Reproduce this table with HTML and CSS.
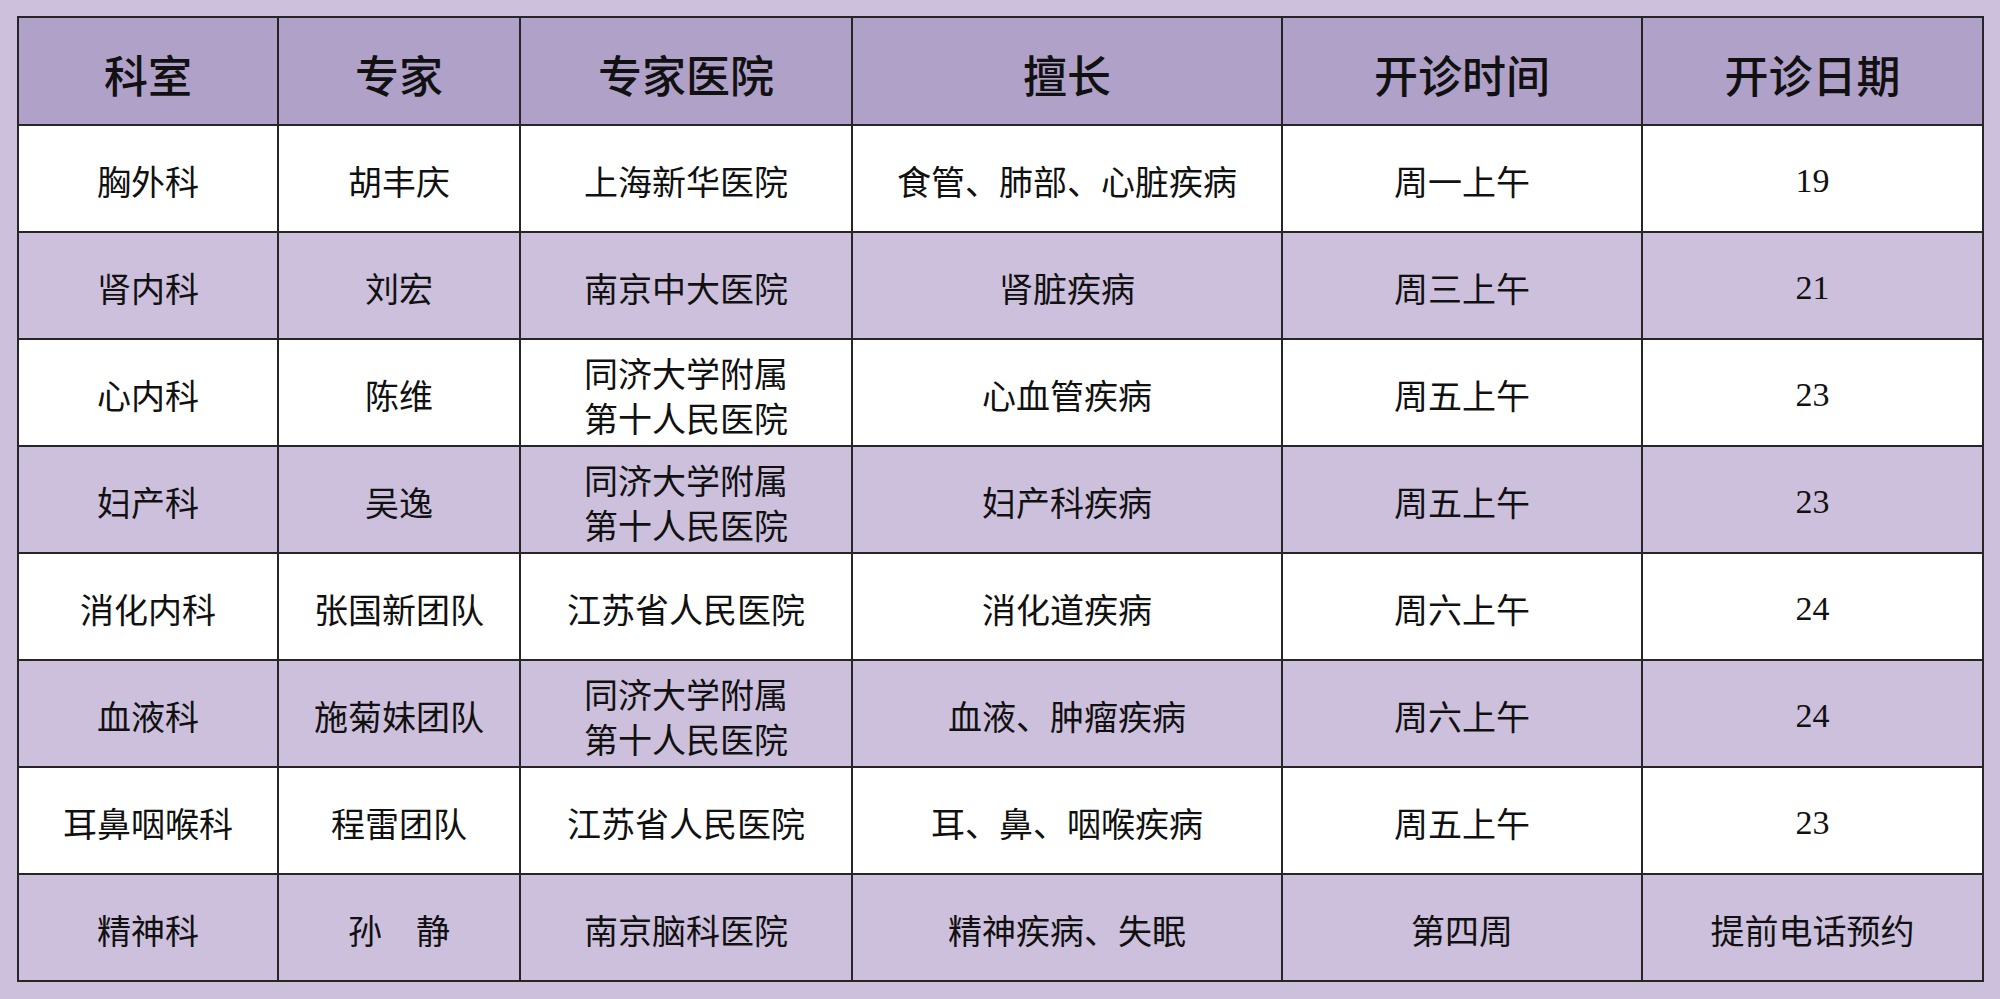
FILE: index.html
```html
<!DOCTYPE html>
<html lang="zh-CN">
<head>
<meta charset="utf-8">
<title>专家门诊</title>
<link rel="stylesheet" href="styles.css">
</head>
<body>
<div class="page">
<table class="sched">
<colgroup>
<col class="c1"><col class="c2"><col class="c3"><col class="c4"><col class="c5"><col class="c6">
</colgroup>
<thead>
<tr class="head"><th>科室</th><th>专家</th><th>专家医院</th><th>擅长</th><th>开诊时间</th><th>开诊日期</th></tr>
</thead>
<tbody>
<tr class="odd"><td>胸外科</td><td>胡丰庆</td><td>上海新华医院</td><td>食管、肺部、心脏疾病</td><td>周一上午</td><td class="num">19</td></tr>
<tr class="even"><td>肾内科</td><td>刘宏</td><td>南京中大医院</td><td>肾脏疾病</td><td>周三上午</td><td class="num">21</td></tr>
<tr class="odd"><td>心内科</td><td>陈维</td><td>同济大学附属<br>第十人民医院</td><td>心血管疾病</td><td>周五上午</td><td class="num">23</td></tr>
<tr class="even"><td>妇产科</td><td>吴逸</td><td>同济大学附属<br>第十人民医院</td><td>妇产科疾病</td><td>周五上午</td><td class="num">23</td></tr>
<tr class="odd"><td>消化内科</td><td>张国新团队</td><td>江苏省人民医院</td><td>消化道疾病</td><td>周六上午</td><td class="num">24</td></tr>
<tr class="even"><td>血液科</td><td>施菊妹团队</td><td>同济大学附属<br>第十人民医院</td><td>血液、肿瘤疾病</td><td>周六上午</td><td class="num">24</td></tr>
<tr class="odd"><td>耳鼻咽喉科</td><td>程雷团队</td><td>江苏省人民医院</td><td>耳、鼻、咽喉疾病</td><td>周五上午</td><td class="num">23</td></tr>
<tr class="even"><td>精神科</td><td>孙　静</td><td>南京脑科医院</td><td>精神疾病、失眠</td><td>第四周</td><td>提前电话预约</td></tr>
</tbody>
</table>
</div>
</body>
</html>
```

FILE: styles.css
```css
html, body {
  margin: 0;
  padding: 0;
  background: #cdc0dc;
}
.page {
  width: 2000px;
  height: 999px;
  padding: 16px 0 0 17px;
  box-sizing: border-box;
  background: #cdc0dc;
}
.sched {
  border-collapse: collapse;
  table-layout: fixed;
  width: 1967px;
  font-family: "Noto Sans CJK SC", "Noto Sans", sans-serif;
  color: #111;
}
.c1 { width: 260px; }
.c2 { width: 242px; }
.c3 { width: 332px; }
.c4 { width: 430px; }
.c5 { width: 360px; }
.c6 { width: 341px; }
.sched th, .sched td {
  border: 2px solid #262626;
  text-align: center;
  vertical-align: middle;
  padding: 0;
}
.head { height: 108px; background: #b0a1c8; }
.head th {
  font-size: 44px;
  font-weight: 500;
  line-height: 1;
  padding-top: 6px;
}
.sched tbody tr { height: 107px; }
.sched td {
  font-size: 34px;
  font-weight: 400;
  line-height: 45px;
  padding-top: 4px;
}
.odd { background: #ffffff; }
.even { background: #cdc0dc; }
.sched td.num {
  font-family: "Liberation Serif", "DejaVu Serif", serif;
  font-size: 34px;
}
```
